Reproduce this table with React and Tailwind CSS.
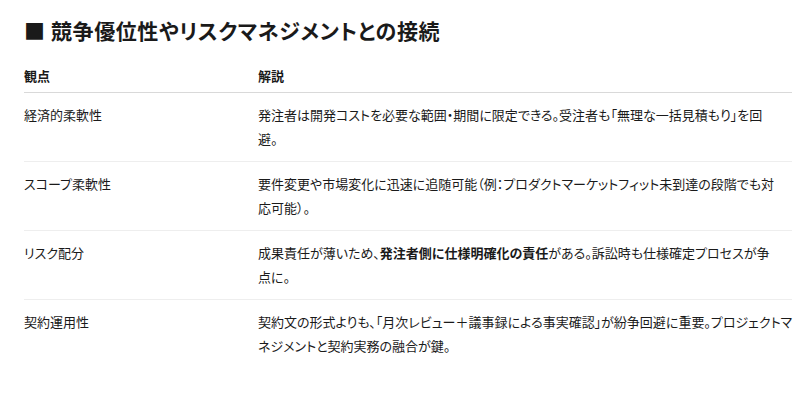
const rows = [
  {
    label: "経済的柔軟性",
    body: (
      <>
        発注者は開発コストを必要な範囲・期間に限定できる。受注者も「無理な一括見積もり」を回
        <br />
        避。
      </>
    ),
  },
  {
    label: "スコープ柔軟性",
    body: (
      <>
        要件変更や市場変化に迅速に追随可能（例：プロダクトマーケットフィット未到達の段階でも対
        <br />
        応可能）。
      </>
    ),
  },
  {
    label: "リスク配分",
    body: (
      <>
        成果責任が薄いため、<strong className="font-bold">発注者側に仕様明確化の責任</strong>がある。訴訟時も仕様確定プロセスが争
        <br />
        点に。
      </>
    ),
  },
  {
    label: "契約運用性",
    body: (
      <>
        契約文の形式よりも、「月次レビュー＋議事録による事実確認」が紛争回避に重要。プロジェクトマ
        <br />
        ネジメントと契約実務の融合が鍵。
      </>
    ),
  },
];

export default function App() {
  return (
    <div
      className="bg-white text-[#1a1a1a] pl-6 pr-3 pt-[14px] w-[804px] h-[400px] overflow-hidden [font-feature-settings:'palt']"
      style={{ fontFamily: '"Noto Sans CJK JP", "Noto Sans", sans-serif' }}
    >
      {/* 見出し */}
      <h2 className="text-[21px] font-bold leading-[32px] tracking-[0.6px]">■ 競争優位性やリスクマネジメントとの接続</h2>

      <div className="mt-[18px] text-[13px]">
        <div className="grid grid-cols-[234px_1fr] border-b border-[#d9d9d9] pb-[4px]">
          <div className="font-bold leading-[24px]">観点</div>
          <div className="font-bold leading-[24px]">解説</div>
        </div>
        {rows.map((row, i) => (
          <div
            key={row.label}
            className={
              "grid grid-cols-[234px_1fr] py-[10px] " +
              (i < rows.length - 1 ? "border-b border-[#eeeeee]" : "")
            }
          >
            <div className="leading-[24px] pr-4">{row.label}</div>
            <div className="leading-[24px] whitespace-nowrap">{row.body}</div>
          </div>
        ))}
      </div>
    </div>
  );
}
